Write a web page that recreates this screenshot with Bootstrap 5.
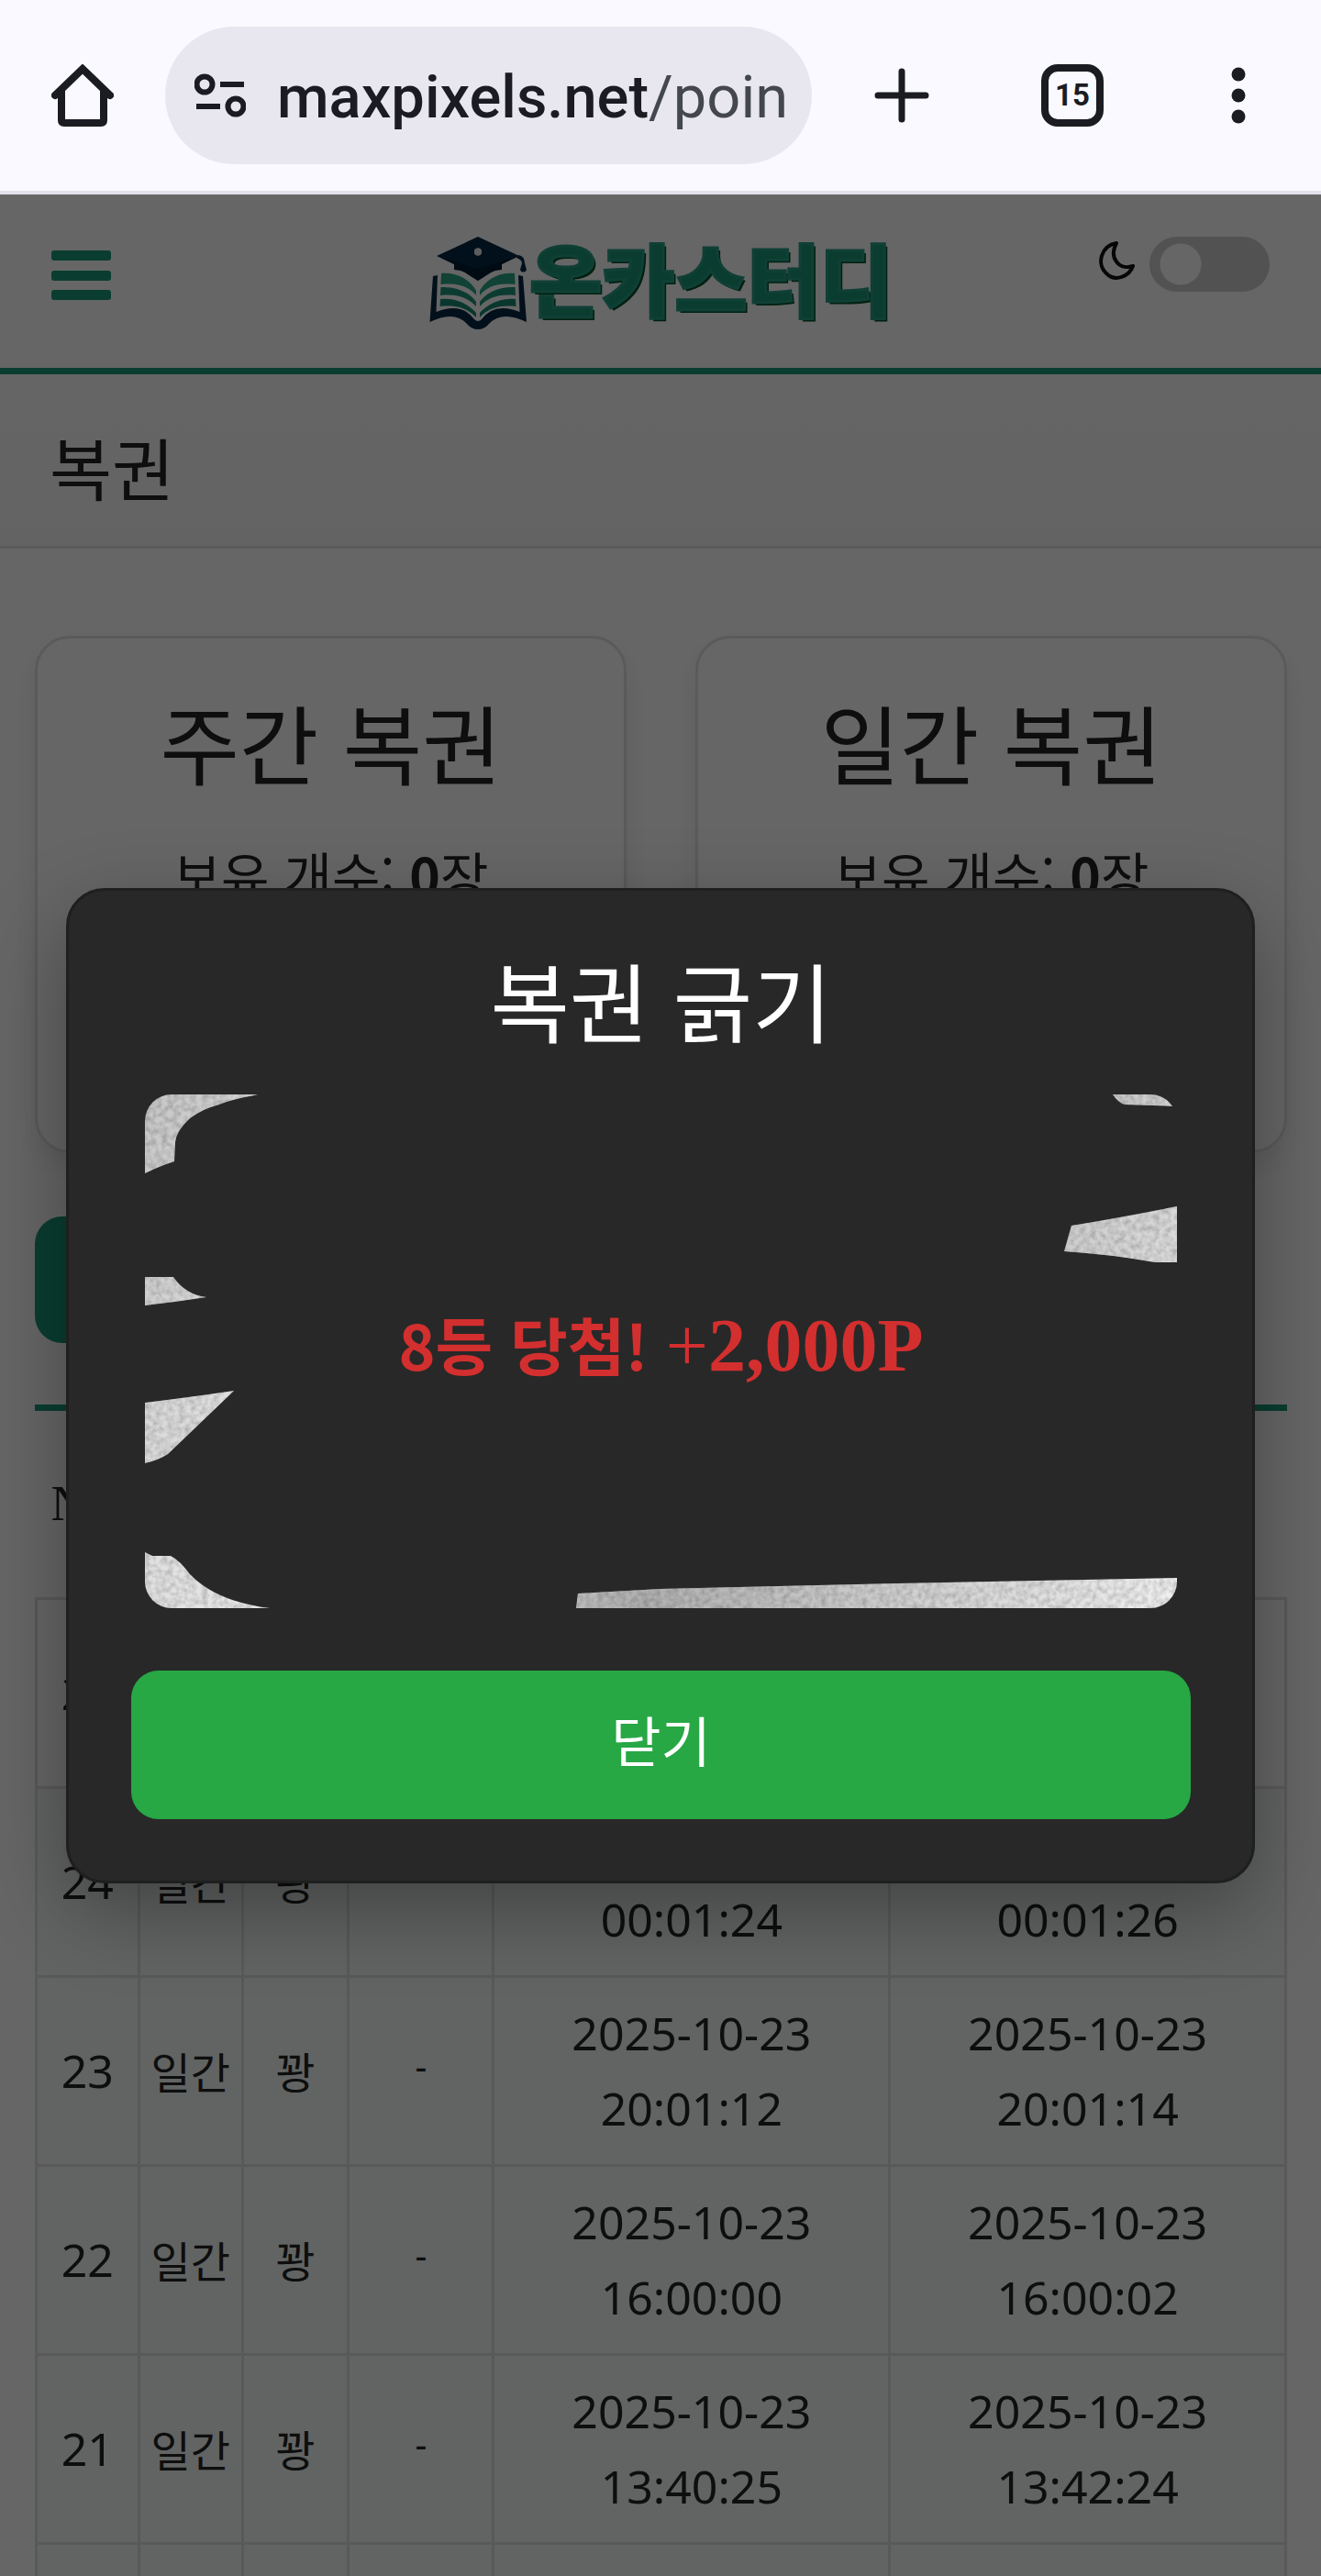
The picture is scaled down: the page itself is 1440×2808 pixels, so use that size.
<!DOCTYPE html>
<html lang="ko">
<head>
<meta charset="utf-8">
<meta name="viewport" content="width=device-width, initial-scale=1">
<title>복권</title>
<link href="https://cdn.jsdelivr.net/npm/bootstrap@5.3.0/dist/css/bootstrap.min.css" rel="stylesheet">
<style>
:root{--brand:#199878;--ink:#242424;--line:#e2e2e2}
body{font-family:"Noto Sans","Noto Sans CJK KR",sans-serif;color:var(--ink);background:#fff}
.kr{font-family:"Noto Sans CJK KR",sans-serif}
.chrome-bar{height:212px;background:#f9f9ff;border-bottom:4px solid #e1e2ec;color:#1b1c21;padding:0 74px 0 56px}
.icon-btn{border:0;background:none;padding:0;line-height:0;color:inherit}
.url-pill{height:150px;border-radius:75px;background:#e8e7ef;width:705px;margin-left:56px;padding:0 30px 0 32px;gap:34px}
.url-text{font-family:Roboto,sans-serif;font-weight:500;font-size:65px;line-height:90px;padding-top:4px;overflow:hidden;white-space:nowrap;color:#1b1c21}
.url-text span{color:#44474f;font-weight:400}
.chrome-actions{gap:122px;padding-left:68px}
.tab-count{width:68px;height:68px;border:8px solid #1b1c21;border-radius:18px;font:700 33px/52px Roboto,sans-serif;padding:0;background:none;color:#1b1c21}
.site-head{height:196px;border-bottom:7px solid var(--brand);padding:46px 56px 0}
.menu-btn{margin-top:15px}
.brand-word{font-family:"Noto Sans CJK KR",sans-serif;font-weight:900;font-size:86px;line-height:88px;color:var(--brand);-webkit-text-stroke:3px #299f86;text-shadow:3px 3px 0 #005028;white-space:nowrap}
.theme-switch{width:131px;height:60px;border-radius:30px;border:0;margin:0;appearance:none;background:radial-gradient(circle at 34px 30px,#fff 22px,transparent 23px) #cdcdcd}
.page-title{height:190px;border-bottom:3px solid var(--line);background:linear-gradient(#fdfdfd,#f8f8f8);padding:12px 54px 0}
.page-title h1{font-size:74px;line-height:104px;font-weight:400;margin:0}
.page-body{padding:95px 37px 0 38px}
.ticket-row{gap:75px}
.ticket{height:564px;border:3px solid var(--line);border-radius:38px;box-shadow:0 14px 28px rgba(0,0,0,.08);padding:44px 0 0;text-align:center;flex:1 1 0}
.ticket h2,.scratch-box h2{font-size:94px;line-height:136px;font-weight:400;margin:0}
.ticket p{font-size:57px;line-height:80px;margin:36px 0 0}
.wide-btn{height:138px;width:48%;border:0;border-radius:30px;background:var(--brand);margin:69px 0 67px}
.history-wrap{border-top:7px solid var(--brand)}
.history{table-layout:fixed;width:100%;border-collapse:collapse;text-align:center;font-size:50px;line-height:82px}
.history thead th{height:204px;font-family:"Liberation Serif","Noto Sans CJK KR",serif;font-weight:400;font-size:54px}
.history tbody tr{height:206px}
.history td{border:3px solid #dedede;padding:19px 0 20px;vertical-align:middle}
.history .kr{font-size:47px}
.history td.points{font-size:40px;padding-bottom:30px}
.history tbody tr+tr{background:#f3f9f7}
.dim{background:rgba(0,0,0,.6)}
.scratch-box{width:90%;background:#282828;border:3px solid #1f1f1f;border-radius:42px;box-shadow:0 30px 90px rgba(0,0,0,.32);padding:50px 67px 67px 68px;color:#fff;text-align:center}
.scratch-area{margin:36px 15px 68px;border-radius:29px;overflow:hidden;aspect-ratio:1125/560}
.prize{font:700 68px/90px "Noto Sans CJK KR",sans-serif;color:#d32f2f;white-space:nowrap;padding-bottom:14px}
.prize span{font-family:"Liberation Serif",serif;font-size:82px}
.prize i{font-style:normal;font-weight:400}
.close-btn{height:162px;border:0;border-radius:30px;background:#28a745;color:#fff;font-size:59px;padding:0 0 10px}
</style>
</head>
<body class="m-0">
<div class="vh-100 d-flex flex-column overflow-hidden">

<nav class="chrome-bar d-flex align-items-center flex-shrink-0" aria-label="browser">
  <button class="icon-btn" aria-label="home"><svg width="68" height="68" viewBox="0 0 68 68" fill="none" stroke="currentColor" stroke-width="8" stroke-linecap="round" stroke-linejoin="round"><path d="M4 34 34 5 64 34" stroke-linejoin="miter"/><path d="M11 30V61q0 3 3 3H54q3 0 3-3V30"/></svg></button>
  <div class="url-pill d-flex align-items-center flex-shrink-0">
    <svg class="flex-shrink-0" width="56" height="48" viewBox="0 0 56 48" fill="none" stroke="#1b1c21" stroke-width="6"><circle cx="11" cy="12" r="8.5"/><path d="M28 12H54M2 36H28"/><circle cx="45" cy="36" r="8.5"/></svg>
    <div class="url-text flex-fill">maxpixels.net<span>/point</span></div>
  </div>
  <div class="chrome-actions d-flex align-items-center flex-fill">
    <button class="icon-btn" aria-label="new tab"><svg width="60" height="60" viewBox="0 0 60 60" stroke="currentColor" stroke-width="7" stroke-linecap="round"><path d="M30 4V56M4 30H56"/></svg></button>
    <button class="tab-count">15</button>
    <button class="icon-btn ms-auto" aria-label="more"><svg width="32" height="64" viewBox="0 0 32 64" fill="currentColor"><circle cx="16" cy="9" r="7.5"/><circle cx="16" cy="32" r="7.5"/><circle cx="16" cy="55" r="7.5"/></svg></button>
  </div>
</nav>

<div class="flex-fill position-relative overflow-hidden">
  <header class="site-head d-flex align-items-start">
    <div class="col"><button class="icon-btn menu-btn" aria-label="menu"><svg width="65" height="54" viewBox="0 0 65 54" fill="#199878"><rect width="65" height="11" rx="3"/><rect y="22" width="65" height="11" rx="3"/><rect y="43" width="65" height="11" rx="3"/></svg></button></div>
    <a href="#" class="d-flex text-decoration-none">
      <svg width="110" height="102" viewBox="0 0 110 102">
        <g fill="#052846">
          <path fill-rule="evenodd" d="M54 0 99 21 80 30V36Q73 36 68 39L54 48 40 39Q35 36 28 36V30L9 21ZM54 12.500a4 4 0 1 0 0 8 4 4 0 1 0 0-8"/>
          <path d="M98 20Q105 21 105 29L107 36Q106 39 103.500 38.500 101 39 100 36L102 29Q102 25 96 23Z"/>
          <path d="M5 43 10 42 8.500 82Q36 71 50 90Q54 94 58 90Q72 71 99.500 82L98 42 103 43 107 93Q80 80 66 95Q61 101 54 101T42 95Q28 80 1.500 93Z"/>
        </g>
        <path fill="#021c33" d="M12 22 54 35 96 22 80 30V36Q73 36 68 39L54 48 40 39Q35 36 28 36V30Z"/>
        <circle cx="54" cy="16.500" r="4" fill="#e8e8e8"/>
        <g fill="#28a584">
          <path d="M14 40C32 38 46 48 52 59V64C44 54 32 50 13.500 52ZM94 40C76 38 62 48 56 59V64C64 54 76 50 94.500 52Z"/>
          <path d="M13.500 55C32 54 46 62 52 71V76C44 67 32 62 13 64ZM94.500 55C76 54 62 62 56 71V76C64 67 76 62 95 64Z" fill="#20957a"/>
          <path d="M13 68C32 66 46 76 52 83V88C44 79 32 74 12.500 76ZM95 68C76 66 62 76 56 83V88C64 79 76 74 95.500 76Z" fill="#178a72"/>
        </g>
      </svg>
      <span class="brand-word">온카스터디</span>
    </a>
    <div class="col d-flex justify-content-end">
      <svg class="mt-1 me-3" width="40" height="44" viewBox="0 0 40 44" fill="none" stroke="#111" stroke-width="4" stroke-linejoin="round"><path d="M20 3C3 6-2 26 9 36C19 46 34 39 38 28C24 33 11 20 20 3Z"/></svg>
      <input class="theme-switch" type="checkbox" role="switch" aria-label="다크 모드">
    </div>
  </header>

  <section class="page-title d-flex align-items-center"><h1 class="kr">복권</h1></section>

  <main class="page-body">
    <div class="ticket-row d-flex">
      <article class="ticket kr"><h2>주간 복권</h2><p>보유 개수: <b>0</b>장</p></article>
      <article class="ticket kr"><h2>일간 복권</h2><p>보유 개수: <b>0</b>장</p></article>
    </div>
    <button class="wide-btn d-block" aria-label="복권 내역"></button>
    <div class="history-wrap">
      <table class="history">
        <colgroup><col style="width:8.2%"><col style="width:8.3%"><col style="width:8.5%"><col style="width:11.6%"><col style="width:31.7%"><col style="width:31.7%"></colgroup>
        <thead><tr><th>No.</th><th></th><th></th><th></th><th></th><th></th></tr></thead>
        <tbody>
          <tr><td>25</td><td></td><td></td><td></td><td></td><td></td></tr>
          <tr><td>24</td><td class="kr">일간</td><td class="kr">꽝</td><td class="points">-</td><td>2025-10-24<br>00:01:24</td><td>2025-10-24<br>00:01:26</td></tr>
          <tr><td>23</td><td class="kr">일간</td><td class="kr">꽝</td><td class="points">-</td><td>2025-10-23<br>20:01:12</td><td>2025-10-23<br>20:01:14</td></tr>
          <tr><td>22</td><td class="kr">일간</td><td class="kr">꽝</td><td class="points">-</td><td>2025-10-23<br>16:00:00</td><td>2025-10-23<br>16:00:02</td></tr>
          <tr><td>21</td><td class="kr">일간</td><td class="kr">꽝</td><td class="points">-</td><td>2025-10-23<br>13:40:25</td><td>2025-10-23<br>13:42:24</td></tr>
          <tr><td></td><td></td><td></td><td></td><td></td><td></td></tr>
        </tbody>
      </table>
    </div>
  </main>

  <div class="dim position-absolute top-0 start-0 w-100 h-100 d-flex align-items-center justify-content-center">
    <div class="scratch-box kr" role="dialog" aria-label="복권 긁기">
      <h2>복권 긁기</h2>
      <div class="scratch-area position-relative d-flex align-items-center justify-content-center">
        <svg class="position-absolute top-0 start-0 w-100 h-100" viewBox="0 0 1125 560">
          <defs>
            <linearGradient id="foil" gradientUnits="userSpaceOnUse" x1="0" y1="0" x2="1125" y2="560"><stop offset="0" stop-color="#c6c6c6"/><stop offset=".2" stop-color="#e2e2e2"/><stop offset=".35" stop-color="#e8e8e8"/><stop offset=".58" stop-color="#b0b0b0"/><stop offset=".75" stop-color="#cacaca"/><stop offset="1" stop-color="#f0f0f0"/></linearGradient>
            <filter id="grain" x="0" y="0" width="100%" height="100%"><feTurbulence type="fractalNoise" baseFrequency=".16" numOctaves="2" seed="4"/><feColorMatrix values=".7 0 0 0 .52 .7 0 0 0 .52 .7 0 0 0 .52 0 0 0 0 1"/><feBlend in2="SourceGraphic" mode="multiply"/><feComposite in2="SourceGraphic" operator="in"/></filter>
          </defs>
          <g fill="url(#foil)" filter="url(#grain)">
            <path d="M0 0H123C105 4 92 6 81 11Q62 16 49 26Q34 40 33 52L32 73Q16 78 0 86Z"/>
            <path d="M0 199H31Q44 218 67 221Q35 226 0 230Z"/>
            <path d="M0 336Q50 330 97 323L25 392Q14 399 0 402Z"/>
            <path d="M0 499 8 503H28Q38 508 49 523Q78 553 136 560H0Z"/>
            <path d="M472 544 562 539 819 533 1125 527V560H470Z"/>
            <path d="M1010 143Q1065 134 1125 122V183H1101Q1050 174 1002 171Z"/>
            <path d="M1055 0Q1061 9 1068 11L1125 13V0Z"/>
          </g>
        </svg>
        <div class="prize position-relative">8등 당첨! <span><i>+</i>2,000P</span></div>
      </div>
      <button class="close-btn w-100 d-block">닫기</button>
    </div>
  </div>
</div>
</div>
<script src="https://cdn.jsdelivr.net/npm/bootstrap@5.3.0/dist/js/bootstrap.bundle.min.js"></script>
</body>
</html>
